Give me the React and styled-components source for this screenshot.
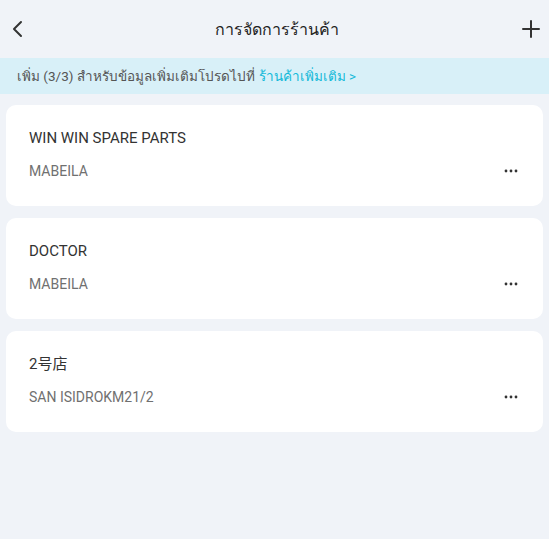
import React from 'react';
import styled, { createGlobalStyle } from 'styled-components';

const GlobalStyle = createGlobalStyle`
  html, body {
    margin: 0;
    padding: 0;
    background: #f0f3f8;
  }
  body {
    font-family: Roboto, "Noto Sans", "Noto Sans CJK SC", sans-serif;
  }
`;

const stores = [
  { name: 'WIN WIN SPARE PARTS', address: 'MABEILA' },
  { name: 'DOCTOR', address: 'MABEILA' },
  { name: '2号店', address: 'SAN ISIDROKM21/2' },
];

const App = () => {
  return (
    <>
      <GlobalStyle />
      <Page>
        <Header>
          <IconButton aria-label="back">
            <svg width="14" height="18" viewBox="0 0 14 18">
              <path d="M10 2 L3 9 L10 16" fill="none" stroke="#333" strokeWidth="2" strokeLinecap="round" strokeLinejoin="round" />
            </svg>
          </IconButton>
          <Title>การจัดการร้านค้า</Title>
          <IconButton aria-label="add">
            <svg width="18" height="18" viewBox="0 0 18 18">
              <path d="M9 1 V17 M1 9 H17" fill="none" stroke="#333" strokeWidth="2" strokeLinecap="round" />
            </svg>
          </IconButton>
        </Header>
        <Notice>
          เพิ่ม (3/3) สำหรับข้อมูลเพิ่มเติมโปรดไปที่ <NoticeLink>ร้านค้าเพิ่มเติม &gt;</NoticeLink>
        </Notice>
        <List>
          {stores.map(store => (
            <Card key={store.name}>
              <StoreName>{store.name}</StoreName>
              <Row>
                <Address>{store.address}</Address>
                <More>
                  <svg width="14" height="4" viewBox="0 0 14 4">
                    <circle cx="2" cy="2" r="1.4" fill="#333" />
                    <circle cx="7" cy="2" r="1.4" fill="#333" />
                    <circle cx="12" cy="2" r="1.4" fill="#333" />
                  </svg>
                </More>
              </Row>
            </Card>
          ))}
        </List>
      </Page>
    </>
  );
};

export default App;

const Page = styled.div`
  min-height: 539px;
  background: #f0f3f8;
`;

const Header = styled.div`
  height: 58px;
  display: flex;
  align-items: center;
  justify-content: space-between;
  padding: 0 8px 0 8px;
`;

const IconButton = styled.div`
  width: 20px;
  height: 20px;
  display: flex;
  align-items: center;
  justify-content: center;
`;

const Title = styled.div`
  font-size: 16px;
  color: #222;
  padding-left: 4px;
`;

const Notice = styled.div`
  height: 36px;
  display: flex;
  align-items: center;
  gap: 4px;
  padding: 0 17px;
  background: #d8f0f8;
  font-size: 13.5px;
  color: #555;
  white-space: nowrap;
`;

const NoticeLink = styled.span`
  color: #12b9d8;
`;

const List = styled.div`
  display: flex;
  flex-direction: column;
  gap: 12px;
  padding: 11px 6px;
`;

const Card = styled.div`
  height: 101px;
  box-sizing: border-box;
  background: #fff;
  border-radius: 10px;
  padding: 23px 23px 0 23px;
  display: flex;
  flex-direction: column;
`;

const StoreName = styled.div`
  font-size: 15px;
  color: #333;
  line-height: 20px;
`;

const Row = styled.div`
  margin-top: 13px;
  display: flex;
  align-items: center;
  justify-content: space-between;
`;

const Address = styled.div`
  font-size: 14px;
  color: #707070;
  line-height: 20px;
`;

const More = styled.div`
  display: flex;
  align-items: center;
  padding-right: 2px;
`;
